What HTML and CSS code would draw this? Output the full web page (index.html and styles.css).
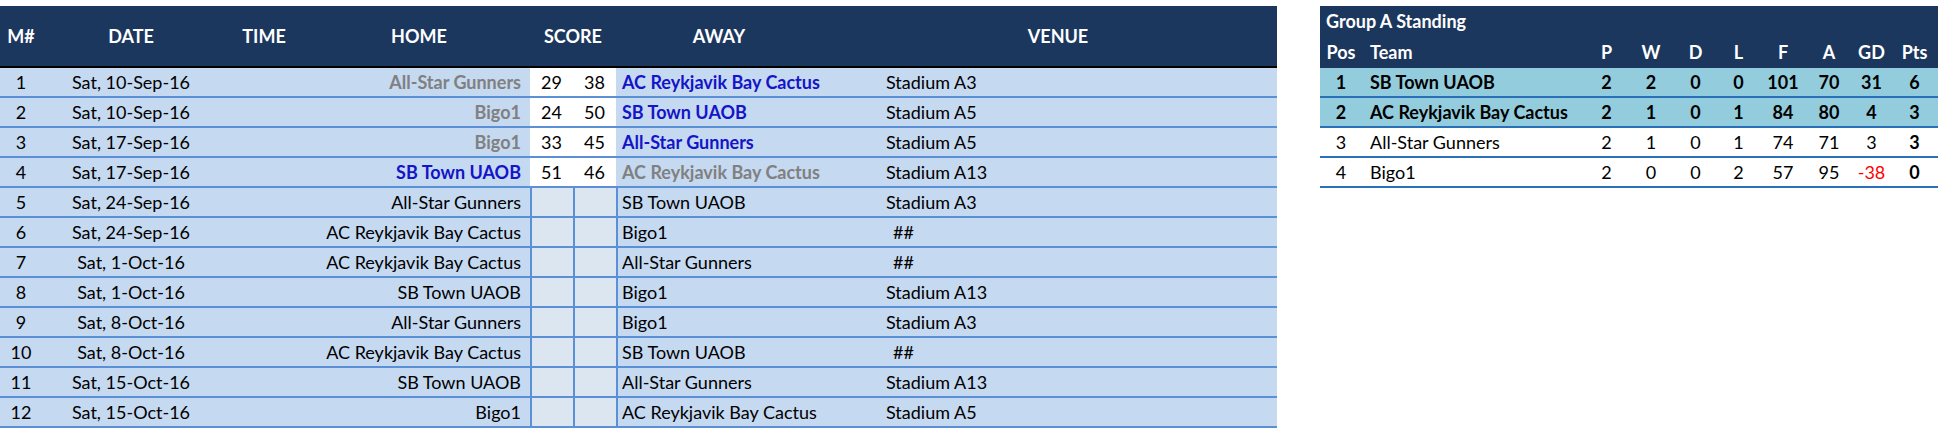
FILE: index.html
```html
<!DOCTYPE html>
<html>
<head>
<meta charset="utf-8">
<link rel="stylesheet" href="styles.css">
</head>
<body>
<div class="page">
  <div class="fixtures">
    <div class="row head">
      <div class="c num">M#</div>
      <div class="c date">DATE</div>
      <div class="c time">TIME</div>
      <div class="c home hc">HOME</div>
      <div class="c score-h">SCORE</div>
      <div class="c away hc">AWAY</div>
      <div class="c venue vh">VENUE</div>
    </div>
    <div class="row">
      <div class="c num">1</div><div class="c date">Sat, 10-Sep-16</div><div class="c time"></div>
      <div class="c home lose">All-Star Gunners</div><div class="c s s1 played">29</div><div class="c s s2 played">38</div>
      <div class="c away win">AC Reykjavik Bay Cactus</div><div class="c venue">Stadium A3</div>
    </div>
    <div class="row">
      <div class="c num">2</div><div class="c date">Sat, 10-Sep-16</div><div class="c time"></div>
      <div class="c home lose">Bigo1</div><div class="c s s1 played">24</div><div class="c s s2 played">50</div>
      <div class="c away win">SB Town UAOB</div><div class="c venue">Stadium A5</div>
    </div>
    <div class="row">
      <div class="c num">3</div><div class="c date">Sat, 17-Sep-16</div><div class="c time"></div>
      <div class="c home lose">Bigo1</div><div class="c s s1 played">33</div><div class="c s s2 played">45</div>
      <div class="c away win">All-Star Gunners</div><div class="c venue">Stadium A5</div>
    </div>
    <div class="row">
      <div class="c num">4</div><div class="c date">Sat, 17-Sep-16</div><div class="c time"></div>
      <div class="c home win">SB Town UAOB</div><div class="c s s1 played">51</div><div class="c s s2 played">46</div>
      <div class="c away lose">AC Reykjavik Bay Cactus</div><div class="c venue">Stadium A13</div>
    </div>
    <div class="row">
      <div class="c num">5</div><div class="c date">Sat, 24-Sep-16</div><div class="c time"></div>
      <div class="c home">All-Star Gunners</div><div class="c s s1 empty"></div><div class="c s s2 empty"></div>
      <div class="c away open">SB Town UAOB</div><div class="c venue">Stadium A3</div>
    </div>
    <div class="row">
      <div class="c num">6</div><div class="c date">Sat, 24-Sep-16</div><div class="c time"></div>
      <div class="c home">AC Reykjavik Bay Cactus</div><div class="c s s1 empty"></div><div class="c s s2 empty"></div>
      <div class="c away open">Bigo1</div><div class="c venue hash">##</div>
    </div>
    <div class="row">
      <div class="c num">7</div><div class="c date">Sat, 1-Oct-16</div><div class="c time"></div>
      <div class="c home">AC Reykjavik Bay Cactus</div><div class="c s s1 empty"></div><div class="c s s2 empty"></div>
      <div class="c away open">All-Star Gunners</div><div class="c venue hash">##</div>
    </div>
    <div class="row">
      <div class="c num">8</div><div class="c date">Sat, 1-Oct-16</div><div class="c time"></div>
      <div class="c home">SB Town UAOB</div><div class="c s s1 empty"></div><div class="c s s2 empty"></div>
      <div class="c away open">Bigo1</div><div class="c venue">Stadium A13</div>
    </div>
    <div class="row">
      <div class="c num">9</div><div class="c date">Sat, 8-Oct-16</div><div class="c time"></div>
      <div class="c home">All-Star Gunners</div><div class="c s s1 empty"></div><div class="c s s2 empty"></div>
      <div class="c away open">Bigo1</div><div class="c venue">Stadium A3</div>
    </div>
    <div class="row">
      <div class="c num">10</div><div class="c date">Sat, 8-Oct-16</div><div class="c time"></div>
      <div class="c home">AC Reykjavik Bay Cactus</div><div class="c s s1 empty"></div><div class="c s s2 empty"></div>
      <div class="c away open">SB Town UAOB</div><div class="c venue hash">##</div>
    </div>
    <div class="row">
      <div class="c num">11</div><div class="c date">Sat, 15-Oct-16</div><div class="c time"></div>
      <div class="c home">SB Town UAOB</div><div class="c s s1 empty"></div><div class="c s s2 empty"></div>
      <div class="c away open">All-Star Gunners</div><div class="c venue">Stadium A13</div>
    </div>
    <div class="row">
      <div class="c num">12</div><div class="c date">Sat, 15-Oct-16</div><div class="c time"></div>
      <div class="c home">Bigo1</div><div class="c s s1 empty"></div><div class="c s s2 empty"></div>
      <div class="c away open">AC Reykjavik Bay Cactus</div><div class="c venue">Stadium A5</div>
    </div>
  </div>

  <div class="standing">
    <div class="st-top">
      <div class="st-title">Group A Standing</div>
      <div class="st-row st-head">
        <div class="t pos">Pos</div><div class="t team">Team</div>
        <div class="t n p">P</div><div class="t n w">W</div><div class="t n d">D</div><div class="t n l">L</div>
        <div class="t n f">F</div><div class="t n a">A</div><div class="t n gd">GD</div><div class="t n pts">Pts</div>
      </div>
    </div>
    <div class="st-row qual">
      <div class="t pos">1</div><div class="t team">SB Town UAOB</div>
      <div class="t n p">2</div><div class="t n w">2</div><div class="t n d">0</div><div class="t n l">0</div>
      <div class="t n f">101</div><div class="t n a">70</div><div class="t n gd">31</div><div class="t n pts">6</div>
    </div>
    <div class="st-row qual">
      <div class="t pos">2</div><div class="t team">AC Reykjavik Bay Cactus</div>
      <div class="t n p">2</div><div class="t n w">1</div><div class="t n d">0</div><div class="t n l">1</div>
      <div class="t n f">84</div><div class="t n a">80</div><div class="t n gd">4</div><div class="t n pts">3</div>
    </div>
    <div class="st-row">
      <div class="t pos">3</div><div class="t team">All-Star Gunners</div>
      <div class="t n p">2</div><div class="t n w">1</div><div class="t n d">0</div><div class="t n l">1</div>
      <div class="t n f">74</div><div class="t n a">71</div><div class="t n gd">3</div><div class="t n pts">3</div>
    </div>
    <div class="st-row">
      <div class="t pos">4</div><div class="t team">Bigo1</div>
      <div class="t n p">2</div><div class="t n w">0</div><div class="t n d">0</div><div class="t n l">2</div>
      <div class="t n f">57</div><div class="t n a">95</div><div class="t n gd neg">-38</div><div class="t n pts">0</div>
    </div>
  </div>
</div>
</body>
</html>
```

FILE: styles.css
```css
html, body {
  margin: 0;
  padding: 0;
  background: #ffffff;
}

body {
  font-family: Lato, "Liberation Sans", sans-serif;
  font-size: 18px;
  color: #000000;
}

.page {
  display: flex;
  align-items: flex-start;
  gap: 43px;
  padding-top: 6px;
}

/* ---------- fixtures ---------- */
.fixtures {
  width: 1277px;
  display: flex;
  flex-direction: column;
}

.row {
  display: flex;
  height: 30px;
  box-sizing: border-box;
  background: #c5d9f1;
  border-bottom: 2px solid #5b8fd6;
}

.row.head {
  height: 62px;
  background: #1c375e;
  border-bottom: 2px solid #000000;
  color: #ffffff;
  font-weight: 700;
}

.c {
  display: flex;
  align-items: center;
  box-sizing: border-box;
  white-space: nowrap;
}

.num { width: 42px; justify-content: center; }
.date { width: 178px; justify-content: center; }
.time { width: 88px; justify-content: center; }
.home { width: 222px; justify-content: flex-end; padding-right: 9px; }
.s { width: 43px; justify-content: center; }
.score-h { width: 86px; justify-content: center; }
.away { width: 240px; padding-left: 6px; }
.venue { width: 421px; padding-left: 30px; }

.head .home { justify-content: center; padding: 0; }
.head .away { width: 206px; justify-content: center; padding: 0; }
.head .venue { width: 455px; justify-content: center; padding-left: 17px; }

.venue.hash { padding-left: 37px; }

.played { background: #ffffff; }
.empty { background: #dce6f1; border-left: 2px solid #5b8fd6; }
.away.open { border-left: 2px solid #5b8fd6; padding-left: 4px; }

.win { color: #1414c8; font-weight: 700; }
.lose { color: #808080; font-weight: 700; }

/* ---------- standing ---------- */
.standing {
  width: 618px;
  display: flex;
  flex-direction: column;
}

.st-top {
  background: #1c375e;
  color: #ffffff;
  font-weight: 700;
  height: 62px;
  display: flex;
  flex-direction: column;
}

.st-title {
  height: 30px;
  display: flex;
  align-items: center;
  padding-left: 6px;
}

.st-row {
  display: flex;
  height: 30px;
  box-sizing: border-box;
  border-bottom: 2px solid #2a70b8;
  background: #ffffff;
}

.st-row.st-head {
  height: 32px;
  border-bottom: none;
  background: transparent;
}

.st-row.qual {
  background: #93cddd;
  font-weight: 700;
}

.t {
  display: flex;
  align-items: center;
  box-sizing: border-box;
  white-space: nowrap;
}

.pos { width: 42px; justify-content: center; }
.team { width: 223px; padding-left: 8px; }
.n { justify-content: center; }
.p { width: 43px; }
.w { width: 46px; }
.d { width: 43px; }
.l { width: 43px; }
.f { width: 46px; }
.a { width: 46px; }
.gd { width: 39px; }
.pts { width: 47px; font-weight: 700; }

.neg { color: #ff0000; }
```
